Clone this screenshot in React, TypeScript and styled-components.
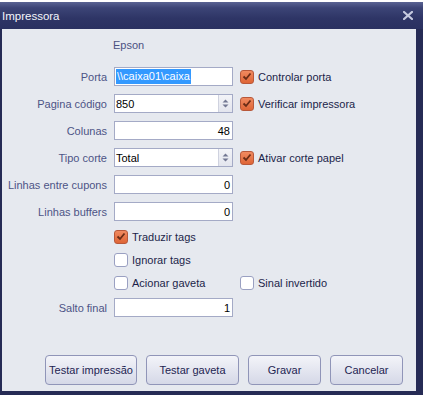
import React from "react";
import styled, { createGlobalStyle } from "styled-components";

const Global = createGlobalStyle`
  html, body { margin: 0; padding: 0; background: #ffffff; }
  body { font-family: "Liberation Sans", Arial, sans-serif; font-size: 11px; }
  * { box-sizing: border-box; }
`;

const Window = styled.div`
  margin-top: 2px;
  width: 423px;
  height: 393px;
  background: #262b55;
  display: flex;
  flex-direction: column;
  padding: 0 7px 4px 2px;
`;

const TitleBar = styled.div`
  height: 27px;
  margin: 0 -7px 0 -2px;
  padding: 0 10px 0 2px;
  display: flex;
  align-items: center;
  justify-content: space-between;
  background: linear-gradient(#5a6393 0%, #3c4476 22%, #2e3566 60%, #2a3060 100%);
  color: #f4f5fb;
  font-size: 11.5px;
`;

const Content = styled.div`
  flex: 1;
  background: #e6e9ef;
  display: flex;
  flex-direction: column;
  padding: 9px 13px 6px 0;
`;

const Brand = styled.div`
  margin-left: 111px;
  height: 14px;
  line-height: 14px;
  color: #4b5182;
`;

const Form = styled.div`
  margin-top: 15px;
  display: grid;
  grid-template-columns: 105px 119px auto;
  grid-template-rows: repeat(6, 19px) repeat(3, 15px) 19px;
  column-gap: 7px;
  row-gap: 8px;
  align-items: center;
`;

const Label = styled.div`
  grid-column: 1;
  text-align: right;
  color: #4d5486;
  white-space: nowrap;
`;

const Field = styled.div<{ $right?: boolean }>`
  grid-column: 2;
  height: 19px;
  background: #ffffff;
  border: 1px solid #a4aac6;
  display: flex;
  align-items: center;
  justify-content: ${(p) => (p.$right ? "flex-end" : "flex-start")};
  padding: 0 2px 0 1px;
  color: #000000;
  font-size: 11px;
`;

const Selected = styled.span`
  background: #3399ff;
  color: #ffffff;
  padding: 1px 1px;
  line-height: 13px;
`;

const SelectBox = styled(Field)`
  padding-right: 0;
  justify-content: space-between;
`;

const Spinner = styled.div`
  width: 14px;
  height: 100%;
  border-left: 1px solid #cfd2df;
  background: linear-gradient(#f3f4f8, #e3e5ee);
  display: flex;
  align-items: center;
  justify-content: center;
`;

const CheckRow = styled.label<{ $col?: number }>`
  grid-column: ${(p) => p.$col ?? 2};
  display: flex;
  align-items: center;
  gap: 4px;
  color: #1c1f4a;
  white-space: nowrap;
`;

const Box = styled.span<{ $on?: boolean }>`
  width: 14px;
  height: 14px;
  border-radius: 3px;
  border: 1px solid ${(p) => (p.$on ? "#b8583a" : "#9aa0c2")};
  background: ${(p) =>
    p.$on ? "linear-gradient(#f08a60, #df6536)" : "#ffffff"};
  display: flex;
  align-items: center;
  justify-content: center;
  flex: none;
`;

const Buttons = styled.div`
  margin-top: auto;
  display: flex;
  justify-content: flex-end;
  gap: 9px;
`;

const Button = styled.button<{ $w: number }>`
  width: ${(p) => p.$w}px;
  height: 30px;
  border: 1px solid #9095b8;
  border-radius: 4px;
  background: linear-gradient(#f3f4f9 0%, #e4e6f0 50%, #d5d8e7 100%);
  font-family: "Liberation Sans", Arial, sans-serif;
  font-size: 11px;
  color: #1e2452;
  padding: 0;
`;

const Close = () => (
  <svg width="10" height="9" viewBox="0 0 10 9">
    <path d="M1 1 L9 8 M9 1 L1 8" stroke="#c6cadf" strokeWidth="2.2" strokeLinecap="square" />
  </svg>
);

const Arrows = () => (
  <svg width="7" height="9" viewBox="0 0 7 9">
    <path d="M3.5 0.5 L6.5 3.5 L0.5 3.5 Z M0.5 5.5 L6.5 5.5 L3.5 8.5 Z" fill="#737893" />
  </svg>
);

const Check = ({ on }: { on?: boolean }) => (
  <Box $on={on}>
    {on && (
      <svg width="10" height="9" viewBox="0 0 10 9">
        <path d="M1.5 4.5 L4 7 L8.5 1.5" stroke="#6a2c16" strokeWidth="1.8" fill="none" />
      </svg>
    )}
  </Box>
);

export default function App() {
  return (
    <>
      <Global />
      <Window>
        <TitleBar>
          <span>Impressora</span>
          <Close />
        </TitleBar>
        <Content>
          <Brand>Epson</Brand>
          <Form>
            <Label>Porta</Label>
            <Field>
              <Selected>\\caixa01\caixa</Selected>
            </Field>
            <CheckRow $col={3}>
              <Check on />
              Controlar porta
            </CheckRow>

            <Label>Pagina código</Label>
            <SelectBox>
              <span>850</span>
              <Spinner>
                <Arrows />
              </Spinner>
            </SelectBox>
            <CheckRow $col={3}>
              <Check on />
              Verificar impressora
            </CheckRow>

            <Label>Colunas</Label>
            <Field $right>48</Field>
            <span />

            <Label>Tipo corte</Label>
            <SelectBox>
              <span>Total</span>
              <Spinner>
                <Arrows />
              </Spinner>
            </SelectBox>
            <CheckRow $col={3}>
              <Check on />
              Ativar corte papel
            </CheckRow>

            <Label>Linhas entre cupons</Label>
            <Field $right>0</Field>
            <span />

            <Label>Linhas buffers</Label>
            <Field $right>0</Field>
            <span />

            <span />
            <CheckRow>
              <Check on />
              Traduzir tags
            </CheckRow>
            <span />

            <span />
            <CheckRow>
              <Check />
              Ignorar tags
            </CheckRow>
            <span />

            <span />
            <CheckRow>
              <Check />
              Acionar gaveta
            </CheckRow>
            <CheckRow $col={3}>
              <Check />
              Sinal invertido
            </CheckRow>

            <Label>Salto final</Label>
            <Field $right>1</Field>
            <span />
          </Form>
          <Buttons>
            <Button $w={92}>Testar impressão</Button>
            <Button $w={93}>Testar gaveta</Button>
            <Button $w={73}>Gravar</Button>
            <Button $w={73}>Cancelar</Button>
          </Buttons>
        </Content>
      </Window>
    </>
  );
}
